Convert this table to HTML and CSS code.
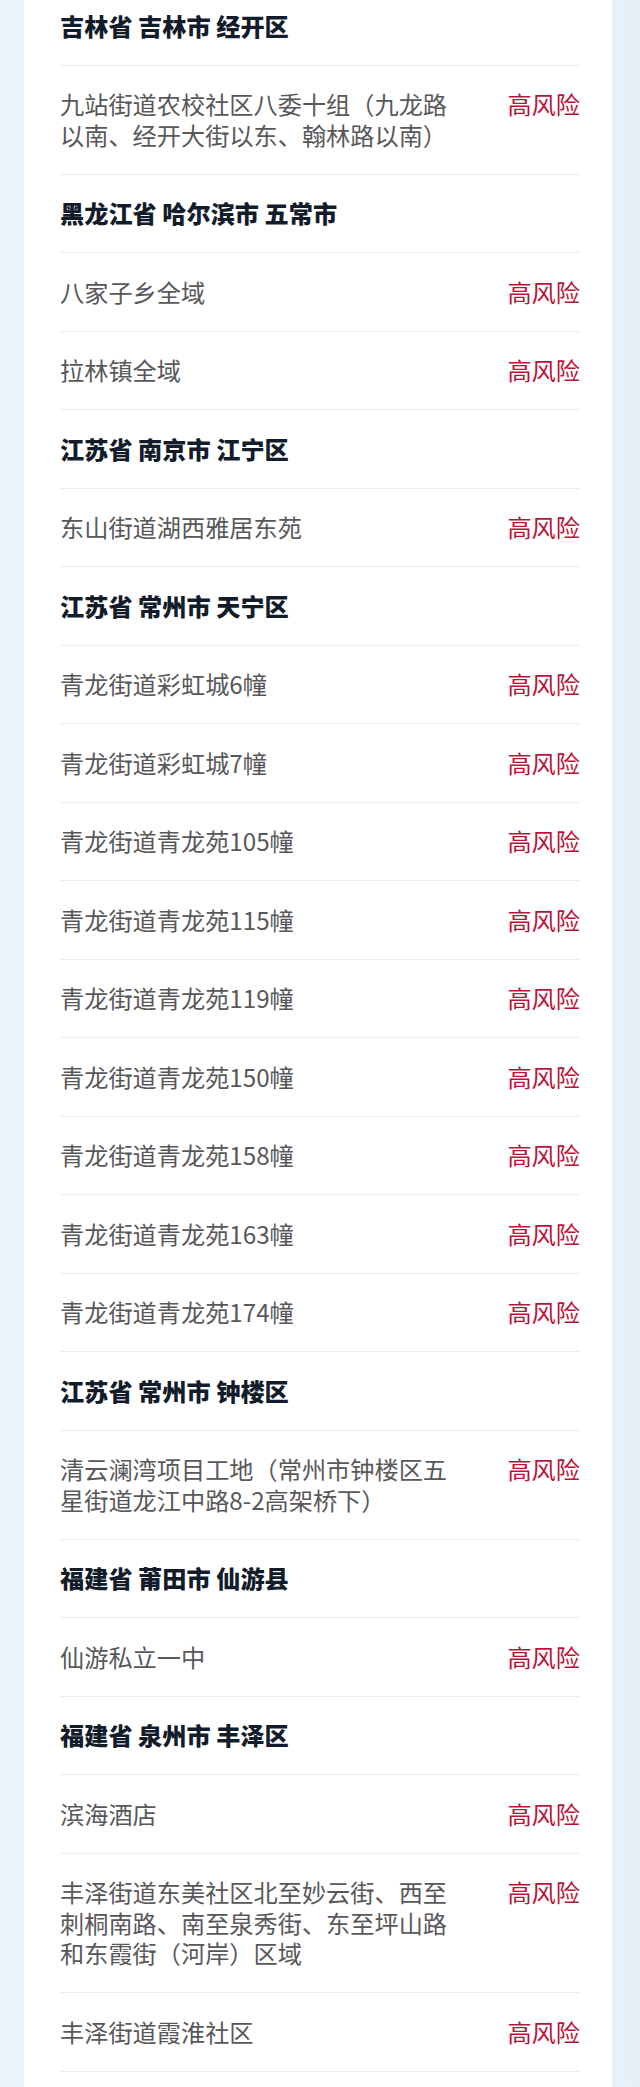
FILE: index.html
```html
<!DOCTYPE html>
<html lang="zh-CN">
<head>
<meta charset="utf-8">
<title>风险地区</title>
<link rel="stylesheet" href="styles.css">
</head>
<body>
<div class="page">
  <div class="card">
    <div class="row region">吉林省 吉林市 经开区</div>
    <div class="row item"><span class="name">九站街道农校社区八委十组（九龙路以南、经开大街以东、翰林路以南）</span><span class="risk">高风险</span></div>
    <div class="row region">黑龙江省 哈尔滨市 五常市</div>
    <div class="row item"><span class="name">八家子乡全域</span><span class="risk">高风险</span></div>
    <div class="row item"><span class="name">拉林镇全域</span><span class="risk">高风险</span></div>
    <div class="row region">江苏省 南京市 江宁区</div>
    <div class="row item"><span class="name">东山街道湖西雅居东苑</span><span class="risk">高风险</span></div>
    <div class="row region">江苏省 常州市 天宁区</div>
    <div class="row item"><span class="name">青龙街道彩虹城6幢</span><span class="risk">高风险</span></div>
    <div class="row item"><span class="name">青龙街道彩虹城7幢</span><span class="risk">高风险</span></div>
    <div class="row item"><span class="name">青龙街道青龙苑105幢</span><span class="risk">高风险</span></div>
    <div class="row item"><span class="name">青龙街道青龙苑115幢</span><span class="risk">高风险</span></div>
    <div class="row item"><span class="name">青龙街道青龙苑119幢</span><span class="risk">高风险</span></div>
    <div class="row item"><span class="name">青龙街道青龙苑150幢</span><span class="risk">高风险</span></div>
    <div class="row item"><span class="name">青龙街道青龙苑158幢</span><span class="risk">高风险</span></div>
    <div class="row item"><span class="name">青龙街道青龙苑163幢</span><span class="risk">高风险</span></div>
    <div class="row item"><span class="name">青龙街道青龙苑174幢</span><span class="risk">高风险</span></div>
    <div class="row region">江苏省 常州市 钟楼区</div>
    <div class="row item"><span class="name">清云澜湾项目工地（常州市钟楼区五星街道龙江中路8-2高架桥下）</span><span class="risk">高风险</span></div>
    <div class="row region">福建省 莆田市 仙游县</div>
    <div class="row item"><span class="name">仙游私立一中</span><span class="risk">高风险</span></div>
    <div class="row region">福建省 泉州市 丰泽区</div>
    <div class="row item"><span class="name">滨海酒店</span><span class="risk">高风险</span></div>
    <div class="row item"><span class="name">丰泽街道东美社区北至妙云街、西至刺桐南路、南至泉秀街、东至坪山路和东霞街（河岸）区域</span><span class="risk">高风险</span></div>
    <div class="row item"><span class="name">丰泽街道霞淮社区</span><span class="risk">高风险</span></div>
  </div>
</div>
</body>
</html>
```

FILE: styles.css
```css
html, body {
  margin: 0;
  padding: 0;
}
body {
  background: linear-gradient(90deg, #e9f4fb 0%, #eef6fc 50%, #e5f0f9 100%);
  font-family: "Noto Sans CJK SC", "Noto Sans", sans-serif;
  min-height: 2087px;
  overflow: hidden;
}
.page {
  padding: 0 24px;
}
.card {
  background: #ffffff;
  margin-top: -13px;
  padding: 0 32px 60px 36px;
  width: 520px;
  box-sizing: content-box;
}
.row {
  padding: 23.5px 0;
  border-bottom: 1.2px solid #ececec;
  font-size: 24.2px;
  line-height: 30.5px;
}
.region {
  font-weight: 900;
  color: #131c2a;
}
.item {
  display: flex;
  justify-content: space-between;
  align-items: flex-start;
}
.name {
  color: #58585b;
  max-width: 400px;
}
.risk {
  color: #bb1237;
  white-space: nowrap;
}
```
